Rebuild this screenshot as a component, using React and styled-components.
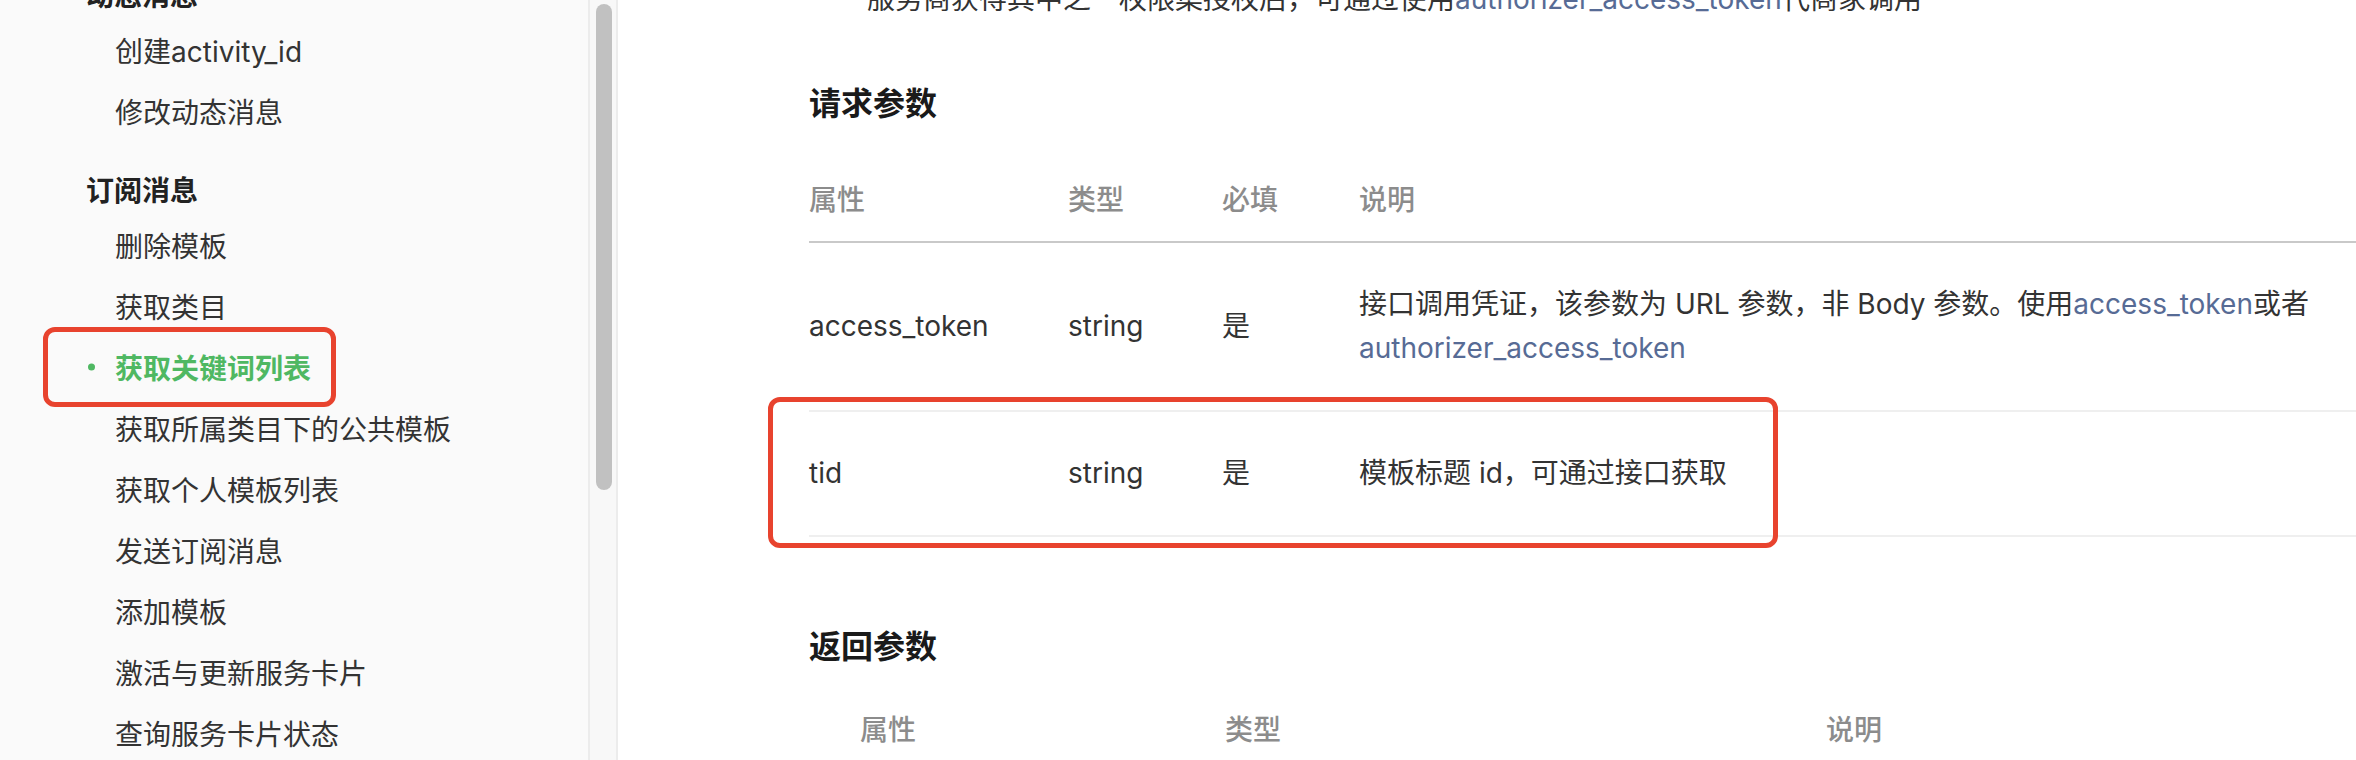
import React from 'react';
import styled, { createGlobalStyle } from 'styled-components';

const GlobalStyle = createGlobalStyle`
  html, body {
    margin: 0;
    padding: 0;
  }
  body {
    font-family: Inter, "Noto Sans CJK SC", sans-serif;
    background: #fff;
    overflow: hidden;
  }
`;

const Page = styled.div`
  display: flex;
  height: 760px;
  overflow: hidden;
`;

const Sidebar = styled.aside`
  width: 588px;
  flex: none;
  background: #fafafa;
  overflow: hidden;
`;

const NavList = styled.nav`
  display: flex;
  flex-direction: column;
  margin-top: -26px;
`;

const NavGroup = styled.div`
  display: flex;
  flex-direction: column;

  & + & {
    margin-top: 28px;
  }
`;

const GroupTitle = styled.div`
  height: 45px;
  line-height: 45px;
  padding-left: 86px;
  font-size: 28px;
  font-weight: 700;
  color: #222;
`;

const NavItem = styled.a`
  position: relative;
  display: flex;
  align-items: center;
  height: 61px;
  padding-left: 115px;
  font-size: 28px;
  font-weight: ${(p) => (p.$active ? 600 : 400)};
  color: ${(p) => (p.$active ? '#4fb862' : '#333')};
  text-decoration: none;
  white-space: nowrap;

  &::before {
    content: '';
    display: ${(p) => (p.$active ? 'block' : 'none')};
    position: absolute;
    left: 88px;
    top: 50%;
    width: 7px;
    height: 7px;
    border-radius: 50%;
    background: #4fb862;
    transform: translateY(-50%);
  }
`;

const Highlight = styled.span`
  position: absolute;
  left: ${(p) => p.$left}px;
  top: ${(p) => p.$top}px;
  width: ${(p) => p.$w}px;
  height: ${(p) => p.$h}px;
  box-sizing: border-box;
  border: 5px solid #e8432e;
  border-radius: 12px;
  pointer-events: none;
`;

const ScrollTrack = styled.div`
  flex: none;
  width: 16px;
  padding: 4px 4px 0 6px;
  background: #f8f8f8;
  border-left: 2px solid #ececec;
  border-right: 2px solid #ececec;
`;

const ScrollThumb = styled.div`
  height: 486px;
  border-radius: 8px;
  background: #c1c1c1;
`;

const Main = styled.main`
  flex: 1;
  min-width: 0;
  padding-left: 191px;
  background: #fff;
  color: #333;
  font-size: 28px;
`;

const Para = styled.p`
  margin: -23px 0 0;
  padding-left: 58px;
  line-height: 44px;
  white-space: nowrap;
`;

const Link = styled.a`
  color: #576b95;
  text-decoration: none;
`;

const SectionTitle = styled.h2`
  margin: ${(p) => p.$gap}px 0 0;
  font-size: 32px;
  line-height: 48px;
  font-weight: 700;
  color: #1a1a1a;
`;

const Table = styled.div`
  margin-top: ${(p) => p.$gap}px;
  display: flex;
  flex-direction: column;
`;

const Row = styled.div`
  position: relative;
  display: grid;
  grid-template-columns: ${(p) => p.$cols};
  align-items: center;
  justify-items: ${(p) => (p.$center ? 'center' : 'start')};
  padding: ${(p) => (p.$head ? '19px 0' : '39px 0 40px')};
  line-height: 44px;
  border-bottom: 2px solid ${(p) => (p.$head ? '#c9c9c9' : '#efefef')};
`;

const HeadCell = styled.div`
  color: #8c8c8c;
  font-weight: 500;
`;

const Cell = styled.div`
  padding-right: ${(p) => (p.$wide ? 40 : 0)}px;
`;

const reqCols = '259px 154px 137px 1fr';
const retCols = '158px 572px 630px';

const nav = [
  {
    title: '动态消息',
    items: ['创建activity_id', '修改动态消息'],
  },
  {
    title: '订阅消息',
    items: [
      '删除模板',
      '获取类目',
      '获取关键词列表',
      '获取所属类目下的公共模板',
      '获取个人模板列表',
      '发送订阅消息',
      '添加模板',
      '激活与更新服务卡片',
      '查询服务卡片状态',
    ],
  },
];

export default function App() {
  return (
    <>
      <GlobalStyle />
      <Page>
        <Sidebar>
          <NavList>
            {nav.map((g) => (
              <NavGroup key={g.title}>
                <GroupTitle>{g.title}</GroupTitle>
                {g.items.map((it) => {
                  const active = it === '获取关键词列表';
                  return (
                    <NavItem key={it} $active={active}>
                      {it}
                      {active && <Highlight $left={43} $top={-9} $w={293} $h={80} />}
                    </NavItem>
                  );
                })}
              </NavGroup>
            ))}
          </NavList>
        </Sidebar>
        <ScrollTrack>
          <ScrollThumb />
        </ScrollTrack>
        <Main>
          <Para>
            服务商获得其中之一权限集授权后，可通过使用<Link>authorizer_access_token</Link>代商家调用
          </Para>

          <SectionTitle $gap={59}>请求参数</SectionTitle>
          <Table $gap={31}>
            <Row $head $cols={reqCols}>
              <HeadCell>属性</HeadCell>
              <HeadCell>类型</HeadCell>
              <HeadCell>必填</HeadCell>
              <HeadCell>说明</HeadCell>
            </Row>
            <Row $cols={reqCols}>
              <Cell>access_token</Cell>
              <Cell>string</Cell>
              <Cell>是</Cell>
              <Cell $wide>
                接口调用凭证，该参数为 URL 参数，非 Body 参数。使用<Link>access_token</Link>或者
                <Link>authorizer_access_token</Link>
              </Cell>
            </Row>
            <Row $cols={reqCols}>
              <Cell>tid</Cell>
              <Cell>string</Cell>
              <Cell>是</Cell>
              <Cell $wide>模板标题 id，可通过接口获取</Cell>
              <Highlight $left={-41} $top={-15} $w={1010} $h={151} />
            </Row>
          </Table>

          <SectionTitle $gap={86}>返回参数</SectionTitle>
          <Table $gap={18}>
            <Row $head $center $cols={retCols}>
              <HeadCell>属性</HeadCell>
              <HeadCell>类型</HeadCell>
              <HeadCell>说明</HeadCell>
            </Row>
          </Table>
        </Main>
      </Page>
    </>
  );
}
